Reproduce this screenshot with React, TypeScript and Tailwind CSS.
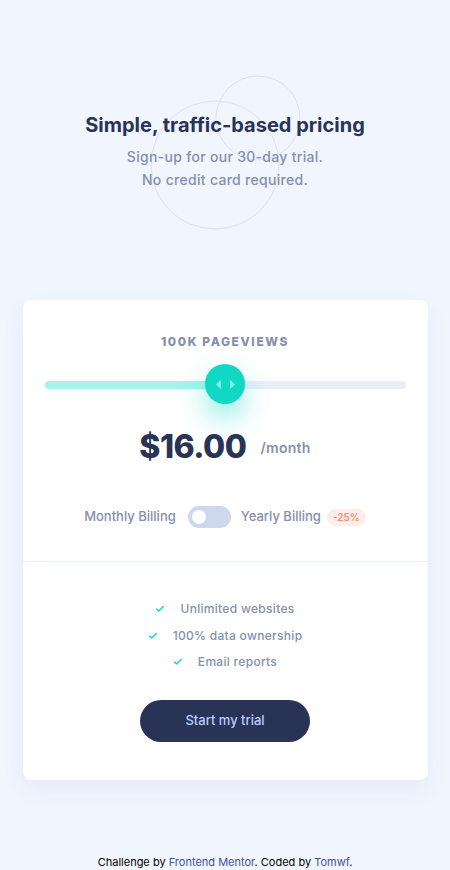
import { Check } from "lucide-react";

const features = ["Unlimited websites", "100% data ownership", "Email reports"];

function Circles() {
  return (
    <svg
      className="pointer-events-none absolute left-[146px] top-[72px]"
      width="160"
      height="166"
      viewBox="0 0 160 166"
      fill="none"
    >
      <circle cx="69" cy="93" r="64" stroke="#dbe1f6" strokeWidth="1" />
      <circle cx="112" cy="46" r="42" stroke="#dbe1f6" strokeWidth="1" />
    </svg>
  );
}

function Slider() {
  return (
    <div className="relative mt-[14px] flex h-10 items-center">
      <div className="mt-[2px] h-2 w-full rounded-full bg-[#eaeefb]">
        <div className="h-2 w-1/2 rounded-full bg-[#a5f3eb]" />
      </div>
      <div className="absolute left-1/2 top-0 flex h-10 w-10 -translate-x-1/2 items-center justify-center gap-[9px] rounded-full bg-[#10d8c4] shadow-[0_14px_28px_rgba(16,216,196,0.45)]">
        <svg width="5" height="9" viewBox="0 0 5 9">
          <path d="M5 0v9L0 4.5z" fill="#80ffe9" />
        </svg>
        <svg width="5" height="9" viewBox="0 0 5 9">
          <path d="M0 0v9l5-4.5z" fill="#80ffe9" />
        </svg>
      </div>
    </div>
  );
}

export default function App() {
  return (
    <main className="flex min-h-[870px] flex-col items-center bg-[#f1f5fe] font-['Inter',sans-serif] text-[#858fad]">
      {/* Header */}
      <header className="relative w-full text-center">
        <Circles />
        <div className="relative pt-[111px]">
          <h1 className="text-[20px] font-bold leading-7 text-[#293356]">
            Simple, traffic-based pricing
          </h1>
          <p className="mt-[6px] text-[14px] font-medium leading-[23px] tracking-[0.3px]">
            Sign-up for our 30-day trial.
            <br />
            No credit card required.
          </p>
        </div>
      </header>

      {/* Card */}
      <section className="mt-[109px] w-[405px] rounded-lg bg-white shadow-[0_10px_25px_rgba(30,60,160,0.06)]">
        <div className="px-[22px] pb-[33px] pt-[34px]">
          <h2 className="text-center text-[12px] font-extrabold leading-4 tracking-[1.6px]">
            100K PAGEVIEWS
          </h2>
          <Slider />
          <div className="mt-[23px] flex items-center justify-center gap-[14px]">
            <span className="text-[32px] font-extrabold leading-10 tracking-[-0.5px] text-[#293356]">
              $16.00
            </span>
            <span className="text-[14px] font-semibold tracking-[0.3px]">/month</span>
          </div>
          <div className="mt-[39px] flex items-center justify-center text-[13px] font-medium">
            <span>Monthly Billing</span>
            <button className="ml-[12px] mr-[10px] flex h-[22px] w-[43px] items-center rounded-full bg-[#cdd7ee] px-[4px]">
              <span className="h-[14px] w-[14px] rounded-full bg-white" />
            </button>
            <span>Yearly Billing</span>
            <span className="ml-[6px] rounded-full bg-[#feede8] px-[6px] py-[1px] text-[10px] font-semibold text-[#ff8c66]">
              -25%
            </span>
          </div>
        </div>
        <div className="border-t border-[#ecf0fb] pb-[38px] pt-[34px]">
          <ul className="flex flex-col items-center text-[12px] font-medium leading-[26.5px] tracking-[0.3px]">
            {features.map((f) => (
              <li key={f} className="flex items-center gap-[15px]">
                <Check size={10} strokeWidth={3.5} className="text-[#10d8c4]" />
                {f}
              </li>
            ))}
          </ul>
          <div className="mt-[24px] flex justify-center">
            <button className="h-[42px] w-[170px] rounded-full bg-[#293356] text-[13px] font-medium text-[#bdccff]">
              Start my trial
            </button>
          </div>
        </div>
      </section>

      <footer className="mt-[75px] text-center text-[11px] leading-[14px] text-black">
        Challenge by <a className="text-[#3e52a3]">Frontend Mentor</a>. Coded by{" "}
        <a className="text-[#3e52a3]">Tomwf</a>.
      </footer>
    </main>
  );
}
